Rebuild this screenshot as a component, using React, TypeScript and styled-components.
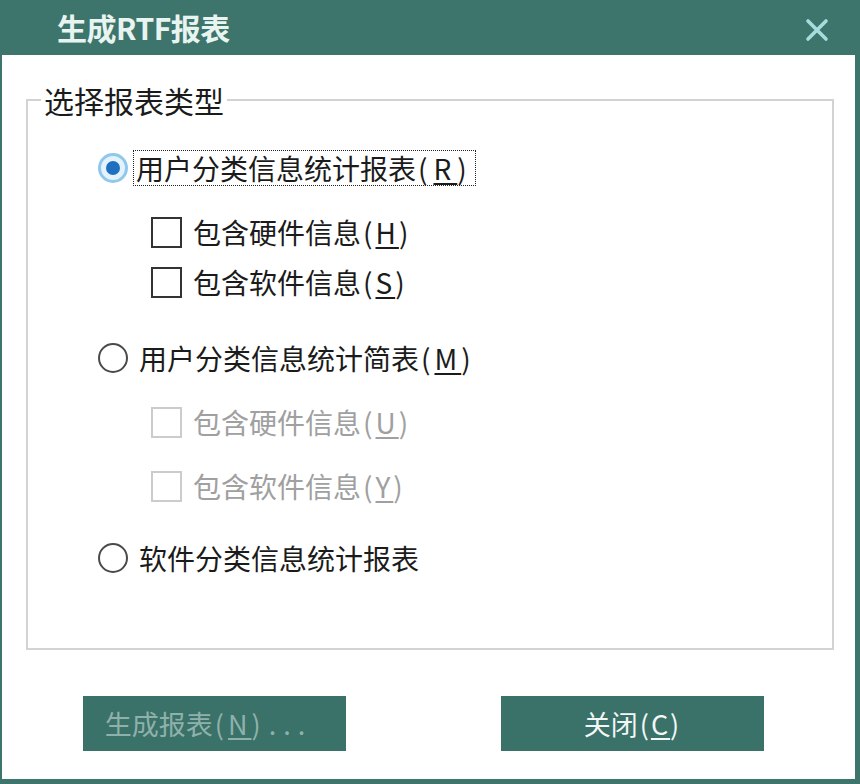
import React from "react";
import styled, { createGlobalStyle } from "styled-components";

const Global = createGlobalStyle`
  html, body { margin: 0; padding: 0; background: #ffffff; }
  body { font-family: "Noto Sans CJK SC", "Noto Sans", sans-serif; }
  * { box-sizing: border-box; }
`;

const teal = "#3d746c";

const Window = styled.div`
  width: 860px;
  height: 784px;
  display: flex;
  flex-direction: column;
  background: #ffffff;
  border-left: 2px solid ${teal};
  border-right: 5px solid ${teal};
  border-bottom: 5px solid ${teal};
`;

const TitleBar = styled.div`
  height: 55px;
  flex: none;
  margin-left: -2px;
  margin-right: -5px;
  background: ${teal};
  display: flex;
  align-items: center;
  justify-content: space-between;
  padding: 0 31px 0 57px;
`;

const Title = styled.div`
  color: #e8f4f0;
  font-size: 30px;
  font-weight: 700;
  letter-spacing: -0.5px;
  line-height: 1;
  margin-top: -2px;
`;

const CloseIcon = styled.svg`
  width: 24px;
  height: 24px;
  margin-top: 4px;
`;

const Client = styled.div`
  flex: 1;
  display: flex;
  flex-direction: column;
  padding: 28px 21px 0 24px;
`;

const Group = styled.fieldset`
  margin: 0;
  height: 567px;
  border: 2px solid #d3d3d3;
  padding: 31px 0 0 70px;
  display: flex;
  flex-direction: column;
`;

const Legend = styled.legend`
  margin-left: -57px;
  padding: 0 3px;
  font-size: 30px;
  line-height: 34px;
  color: #1b1b1b;
`;

const Row = styled.label<{ $mt: number; $indent?: boolean }>`
  display: flex;
  align-items: center;
  height: 40px;
  margin-top: ${(p) => p.$mt}px;
  margin-left: ${(p) => (p.$indent ? 53 : 0)}px;
  gap: 8px;
`;

const RadioCircle = styled.span<{ $checked?: boolean }>`
  width: 30px;
  height: 30px;
  border-radius: 50%;
  flex: none;
  display: flex;
  align-items: center;
  justify-content: center;
  border: ${(p) => (p.$checked ? "3px solid #8fc8ec" : "2px solid #4a4a4a")};
  background: ${(p) => (p.$checked ? "#e4f2fb" : "#ffffff")};
  &::after {
    content: "";
    display: ${(p) => (p.$checked ? "block" : "none")};
    width: 14px;
    height: 14px;
    border-radius: 50%;
    background: #1f6fc0;
  }
`;

const CheckBox = styled.span<{ $disabled?: boolean }>`
  width: 31px;
  height: 31px;
  flex: none;
  border: 2px solid ${(p) => (p.$disabled ? "#cccccc" : "#333333")};
  background: #ffffff;
`;

const Text = styled.span<{ $disabled?: boolean; $focus?: boolean }>`
  font-size: 28px;
  line-height: 34px;
  color: ${(p) => (p.$disabled ? "#a0a0a0" : "#1b1b1b")};
  padding: 0 2px;
  margin-left: ${(p) => (p.$focus ? -3 : 0)}px;
  border: 1px dotted ${(p) => (p.$focus ? "#222" : "transparent")};
  white-space: nowrap;
`;

const Mnemonic = styled.span<{ $space: number }>`
  letter-spacing: ${(p) => p.$space}px;
  margin-left: 2px;
`;

const Key = styled.span`
  text-decoration: underline;
  text-underline-offset: 3px;
  text-decoration-thickness: 2px;
`;

const Buttons = styled.div`
  display: flex;
  gap: 155px;
  padding: 46px 0 0 57px;
`;

const Button = styled.button<{ $disabled?: boolean }>`
  width: 263px;
  height: 55px;
  border: none;
  background: #3a7168;
  color: ${(p) => (p.$disabled ? "#8fb1ab" : "#f2f7f6")};
  font-family: "Noto Sans CJK SC", "Noto Sans", sans-serif;
  font-size: 27px;
  padding: 0;
  display: flex;
  align-items: center;
  justify-content: center;
`;

const BtnLabel = styled.span<{ $shift?: number }>`
  margin-left: ${(p) => p.$shift ?? 0}px;
  white-space: nowrap;
`;

const Dots = styled.span`
  letter-spacing: 7px;
  margin-left: 4px;
`;

function Mn({ k, space }: { k: string; space: number }) {
  return (
    <Mnemonic $space={space}>
      (<Key>{k}</Key>)
    </Mnemonic>
  );
}

export default function App() {
  return (
    <>
      <Global />
      <Window>
        <TitleBar>
          <Title>生成RTF报表</Title>
          <CloseIcon viewBox="0 0 24 24">
            <path d="M3 3 L21 21 M21 3 L3 21" stroke="#a8dcdc" strokeWidth="3.6" strokeLinecap="round" />
          </CloseIcon>
        </TitleBar>
        <Client>
          <Group>
            <Legend>选择报表类型</Legend>
            <Row $mt={0}>
              <RadioCircle $checked />
              <Text $focus>
                用户分类信息统计报表<Mn k="R" space={6} />
              </Text>
            </Row>
            <Row $mt={24} $indent>
              <CheckBox />
              <Text>
                包含硬件信息<Mn k="H" space={3} />
              </Text>
            </Row>
            <Row $mt={10} $indent>
              <CheckBox />
              <Text>
                包含软件信息<Mn k="S" space={3} />
              </Text>
            </Row>
            <Row $mt={36}>
              <RadioCircle />
              <Text>
                用户分类信息统计简表<Mn k="M" space={4} />
              </Text>
            </Row>
            <Row $mt={24} $indent>
              <CheckBox $disabled />
              <Text $disabled>
                包含硬件信息<Mn k="U" space={3} />
              </Text>
            </Row>
            <Row $mt={24} $indent>
              <CheckBox $disabled />
              <Text $disabled>
                包含软件信息<Mn k="Y" space={3} />
              </Text>
            </Row>
            <Row $mt={32}>
              <RadioCircle />
              <Text>软件分类信息统计报表</Text>
            </Row>
          </Group>
          <Buttons>
            <Button $disabled disabled>
              <BtnLabel $shift={-12}>
                生成报表<Mn k="N" space={4} />
                <Dots>...</Dots>
              </BtnLabel>
            </Button>
            <Button>
              <BtnLabel>
                关闭<Mn k="C" space={2} />
              </BtnLabel>
            </Button>
          </Buttons>
        </Client>
      </Window>
    </>
  );
}
